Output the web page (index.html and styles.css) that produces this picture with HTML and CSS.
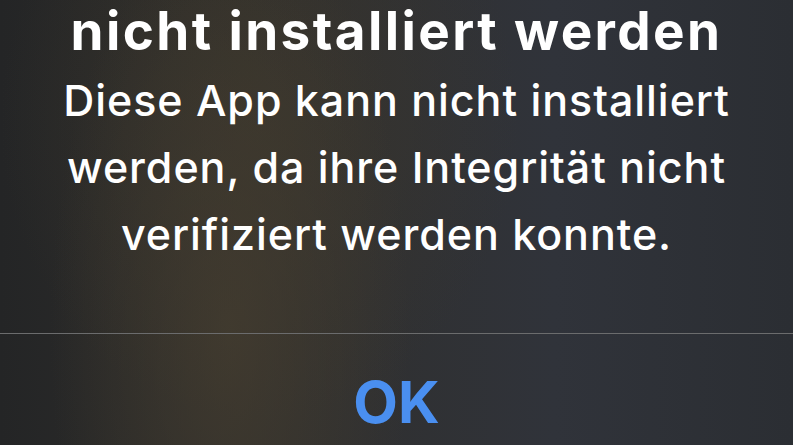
FILE: index.html
```html
<!DOCTYPE html>
<html lang="de">
<head>
  <meta charset="UTF-8">
  <meta name="viewport" content="width=device-width, initial-scale=1.0">
  <title>App kann nicht installiert werden</title>
  <link rel="stylesheet" href="styles.css">
</head>
<body>
  <div class="alert">
    <div class="alert-content">
      <h1 class="alert-title">nicht installiert werden</h1>
      <p class="alert-message">Diese App kann nicht installiert<br>werden, da ihre Integrität nicht<br>verifiziert werden konnte.</p>
    </div>
    <div class="alert-actions">
      <button class="alert-button">OK</button>
    </div>
  </div>
</body>
</html>
```

FILE: styles.css
```css
html, body {
  margin: 0;
  padding: 0;
  height: 100%;
}
body {
  font-family: Inter, Roboto, "Liberation Sans", sans-serif;
  background: #2a2b2c;
  overflow: hidden;
}
.alert {
  height: 445px;
  display: flex;
  flex-direction: column;
  background:
    radial-gradient(ellipse 180px 420px at 230px 330px, rgba(70, 62, 48, 0.7), rgba(70, 62, 48, 0) 100%),
    radial-gradient(ellipse 260px 300px at 260px 120px, rgba(62, 56, 44, 0.6), rgba(62, 56, 44, 0) 100%),
    linear-gradient(90deg, #242526 0%, #2f2e2b 30%, #30333a 70%, #2b2e33 100%);
}
.alert-content {
  height: 333px;
  box-sizing: border-box;
  text-align: center;
  color: #fff;
}
.alert-title {
  margin: 0;
  font-size: 53px;
  font-weight: 700;
  line-height: 62px;
  letter-spacing: 2.4px;
}
.alert-message {
  margin: 5px 0 0;
  font-size: 43px;
  line-height: 67px;
  font-weight: 500;
  letter-spacing: 0.95px;
}
.alert-actions {
  border-top: 1px solid #6b6c6d;
  flex: 1;
  display: flex;
  justify-content: center;
  align-items: flex-start;
  padding-top: 33px;
}
.alert-button {
  background: none;
  border: none;
  padding: 0;
  font-family: Inter, Roboto, "Liberation Sans", sans-serif;
  font-size: 58px;
  line-height: 70px;
  font-weight: 700;
  color: #4a8ff0;
  cursor: pointer;
}
```
